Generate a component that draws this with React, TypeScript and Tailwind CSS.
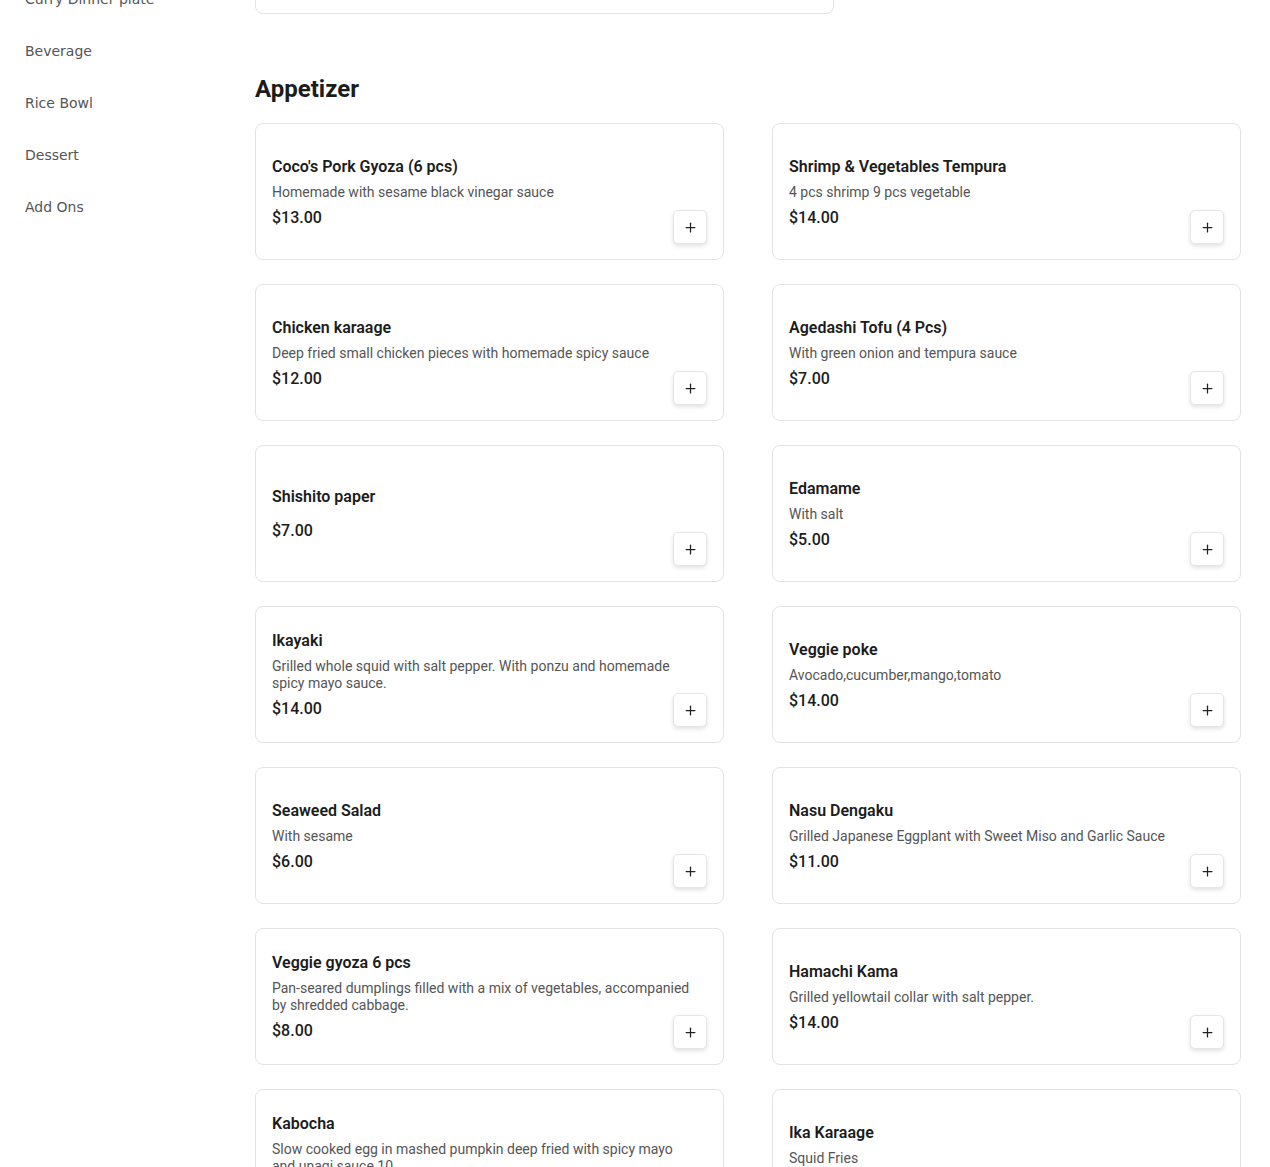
import React from "react";
import { Plus } from "lucide-react";

type Item = { name: string; desc?: string; price: string };

const items: Item[] = [
  { name: "Coco's Pork Gyoza (6 pcs)", desc: "Homemade with sesame black vinegar sauce", price: "$13.00" },
  { name: "Shrimp & Vegetables Tempura", desc: "4 pcs shrimp 9 pcs vegetable", price: "$14.00" },
  { name: "Chicken karaage", desc: "Deep fried small chicken pieces with homemade spicy sauce", price: "$12.00" },
  { name: "Agedashi Tofu (4 Pcs)", desc: "With green onion and tempura sauce", price: "$7.00" },
  { name: "Shishito paper", price: "$7.00" },
  { name: "Edamame", desc: "With salt", price: "$5.00" },
  { name: "Ikayaki", desc: "Grilled whole squid with salt pepper. With ponzu and homemade spicy mayo sauce.", price: "$14.00" },
  { name: "Veggie poke", desc: "Avocado,cucumber,mango,tomato", price: "$14.00" },
  { name: "Seaweed Salad", desc: "With sesame", price: "$6.00" },
  { name: "Nasu Dengaku", desc: "Grilled Japanese Eggplant with Sweet Miso and Garlic Sauce", price: "$11.00" },
  { name: "Veggie gyoza 6 pcs", desc: "Pan-seared dumplings filled with a mix of vegetables, accompanied by shredded cabbage.", price: "$8.00" },
  { name: "Hamachi Kama", desc: "Grilled yellowtail collar with salt pepper.", price: "$14.00" },
  { name: "Kabocha", desc: "Slow cooked egg in mashed pumpkin deep fried with spicy mayo and unagi sauce 10", price: "$10.00" },
  { name: "Ika Karaage", desc: "Squid Fries", price: "$12.00" },
];

const categories = ["Curry Dinner plate", "Beverage", "Rice Bowl", "Dessert", "Add Ons"];

function Card({ item }: { item: Item }) {
  return (
    <div className="relative box-border h-[137px] rounded-lg border border-[#e3e3e3] bg-white p-4 flex items-center">
      <div className="flex flex-col pt-[1px] pr-[12px] w-full">
        <div className="text-[16px] leading-6 font-semibold text-[#1c1c1c]">{item.name}</div>
        <div className="mt-[5px] text-[14px] leading-[17px] text-[#555555]">{item.desc ?? ""}</div>
        <div className="mt-[5px] text-[16px] leading-6 font-medium text-[#1c1c1c]">{item.price}</div>
      </div>
      <button className="absolute right-4 bottom-[15px] w-[34px] h-[34px] rounded-[5px] border border-[#e6e6e6] bg-white shadow-[0_2px_4px_rgba(0,0,0,0.12)] flex items-center justify-center text-[#222]">
        <Plus size={15} strokeWidth={2} />
      </button>
    </div>
  );
}

export default function App() {
  return (
    <div className="w-[1270px] bg-white flex" style={{ fontFamily: "Roboto, 'Noto Sans', sans-serif" }}>
      <aside className="w-[255px] shrink-0 flex flex-col mt-[-27px] pl-[25px]" style={{ fontFamily: "'DejaVu Sans', sans-serif" }}>
        {categories.map((c) => (
          <div key={c} className="h-[52px] flex items-center text-[14px] text-[#555555]">
            {c}
          </div>
        ))}
      </aside>
      <main className="w-[986px] shrink-0 flex flex-col">
        <div className="mt-[-46px] h-[60px] w-[579px] rounded-lg border border-[#e3e3e3] bg-white" />
        <h2 className="mt-[59px] text-[24px] leading-8 font-bold text-[#1c1c1c]">Appetizer</h2>
        <div className="mt-[18px] grid grid-cols-2 gap-x-12 gap-y-6">
          {items.map((it) => (
            <Card key={it.name} item={it} />
          ))}
        </div>
      </main>
    </div>
  );
}
